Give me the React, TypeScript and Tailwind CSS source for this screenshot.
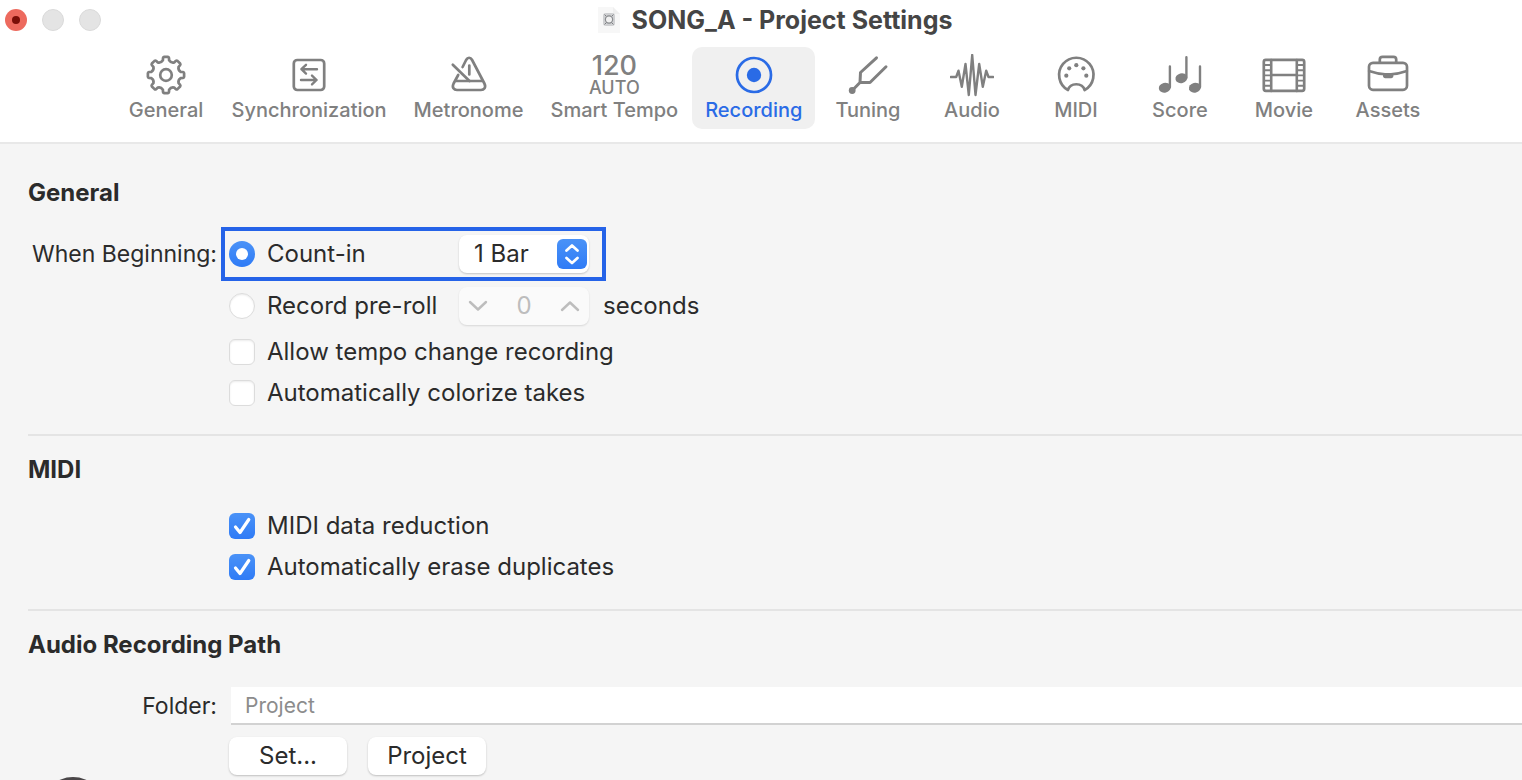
import type { ReactNode } from 'react';

interface Tab {
  label: string;
  icon: ReactNode;
}

function Icon({ children }: { children: ReactNode }) {
  return (
    <svg
      viewBox="0 0 44 44"
      className="h-11 w-11"
      fill="none"
      stroke="currentColor"
      strokeWidth="2.7"
      strokeLinecap="round"
      strokeLinejoin="round"
      aria-hidden="true"
    >
      {children}
    </svg>
  );
}

// Eight rounded teeth around the centre of the gear
function gearPath(cx: number, cy: number) {
  const at = (r: number, deg: number) => {
    const a = ((deg - 90) * Math.PI) / 180;
    return `${(cx + r * Math.cos(a)).toFixed(2)} ${(cy + r * Math.sin(a)).toFixed(2)}`;
  };
  let d = '';
  for (let i = 0; i < 8; i++) {
    const c = i * 45;
    d += `${i === 0 ? 'M' : 'L'}${at(15, c - 12)} L${at(17.3, c - 10)} Q${at(18.2, c - 9)} ${at(18.2, c - 6)} `;
    d += `L${at(18.2, c + 6)} Q${at(18.2, c + 9)} ${at(17.3, c + 10)} L${at(15, c + 12)} Q${at(12.8, c + 22.5)} ${at(15, c + 33)} `;
  }
  return d + 'Z';
}

const tabs: Tab[] = [
  {
    label: 'General',
    icon: (
      <Icon>
        <path d={gearPath(22, 21)} />
        <circle cx="22" cy="21" r="5.8" />
      </Icon>
    ),
  },
  {
    label: 'Synchronization',
    icon: (
      <Icon>
        <rect x="6.8" y="6" width="30.4" height="30" rx="3.5" />
        <path d="M30 15.2H14.5M19 10.8l-4.6 4.4 4.6 4.4M14 26h15.5M25 21.6l4.6 4.4-4.6 4.4" strokeWidth="2.4" />
      </Icon>
    ),
  },
  {
    label: 'Metronome',
    icon: (
      <Icon>
        <path d="M15.6 13l3.5-7c1.6-3 4.4-3 6 0l12.3 23.5c2 4-.4 6.5-3.4 6.5H10c-3 0-5.4-2.500-3.4-6.500l4.600-8.500M9 27h26.500" strokeWidth="2.7" />
        <path d="M5.8 10.8L22.5 27M22.3 11.5v9" strokeWidth="2.7" />
      </Icon>
    ),
  },
  {
    label: 'Smart Tempo',
    icon: (
      <span className="flex h-11 flex-col items-center font-medium">
        <span className="text-[27px] leading-6">120</span>
        <span className="text-lg leading-5">AUTO</span>
      </span>
    ),
  },
  {
    label: 'Recording',
    icon: (
      <Icon>
        <circle cx="22" cy="21" r="17" />
        <circle cx="22" cy="21" r="7.2" fill="currentColor" stroke="none" />
      </Icon>
    ),
  },
  {
    label: 'Tuning',
    icon: (
      <Icon>
        <circle cx="6.2" cy="36.5" r="3.4" fill="currentColor" stroke="none" />
        <path d="M6.2 36.5L14 28.5M30.5 3.8L14.5 18.5 14 28.5h10L40 12.8" strokeWidth="3" />
      </Icon>
    ),
  },
  {
    label: 'Audio',
    icon: (
      <Icon>
        <path d="M.8 23h5.4l2.3-6.3 3.3 16 3.7-22.7 3.3 31 3.4-40 3.3 40 3.7-31 3.6 22.7 3.4-16 2.3 6.3h4.7" strokeWidth="2.4" />
      </Icon>
    ),
  },
  {
    label: 'MIDI',
    icon: (
      <Icon>
        <path d="M14 36A17.200 17.200 0 1 1 30.6 36C28.5 28.3 16.1 28.3 14 36z" />
        <g fill="currentColor" stroke="none">
          <circle cx="12.3" cy="21.7" r="2.1" />
          <circle cx="15.2" cy="14.3" r="2.1" />
          <circle cx="22.3" cy="11.2" r="2.1" />
          <circle cx="29.4" cy="14.3" r="2.1" />
          <circle cx="32.3" cy="21.7" r="2.1" />
        </g>
      </Icon>
    ),
  },
  {
    label: 'Score',
    icon: (
      <Icon>
        <g fill="currentColor" stroke="none">
          <ellipse cx="6.8" cy="33.7" rx="6" ry="4.9" transform="rotate(-14 6.8 33.7)" />
          <ellipse cx="23.4" cy="24.2" rx="6" ry="4.9" transform="rotate(-14 23.4 24.2)" />
          <ellipse cx="36.9" cy="33.7" rx="6" ry="4.9" transform="rotate(-14 36.9 33.7)" />
        </g>
        <path d="M11.9 33V12.5M28.4 23.5V3.2M42 33V12.5" strokeWidth="2.4" />
      </Icon>
    ),
  },
  {
    label: 'Movie',
    icon: (
      <Icon>
        <rect x="1.8" y="5.8" width="40.4" height="31" rx="2" />
        <path d="M9.2 6v31M34.8 6v31M9.2 21h25.6" strokeWidth="2.6" />
        <path d="M2 11h7M2 16.2h7M2 21.4h7M2 26.6h7M2 31.8h7M35 11h7M35 16.2h7M35 21.4h7M35 26.6h7M35 31.8h7" strokeWidth="1.9" />
      </Icon>
    ),
  },
  {
    label: 'Assets',
    icon: (
      <Icon>
        <rect x="3" y="8.8" width="38" height="27" rx="4" />
        <path d="M13.8 8.5V5.6c0-1.8 1-2.8 2.8-2.8h10.8c1.8 0 2.8 1 2.8 2.8v2.9" />
        <path d="M3 17c6 2 10 3 16 3.3h6c6-.3 10-1.3 16-3.3" strokeWidth="2.4" />
        <path d="M17 20.2h10.4v1.8c0 1.4-1 2.2-2.2 2.2h-6c-1.2 0-2.2-.8-2.2-2.2z" fill="currentColor" stroke="none" />
      </Icon>
    ),
  },
];

function Choice({ type, id, name, label, checked = false }: {
  type: 'radio' | 'checkbox';
  id: string;
  name?: string;
  label: string;
  checked?: boolean;
}) {
  return (
    <div className="flex h-7 items-center gap-3">
      <span className="grid h-[26px] w-[26px] shrink-0">
        <input
          id={id}
          type={type}
          name={name}
          defaultChecked={checked}
          className={`peer col-start-1 row-start-1 h-[26px] w-[26px] appearance-none border border-[#dcdcdc] bg-white shadow-[inset_0_1px_2px_rgba(0,0,0,0.08)] checked:border-0 checked:bg-linear-to-b checked:from-[#4a92f7] checked:to-[#2f7bf6] checked:shadow-none ${
            type === 'radio' ? 'rounded-full' : 'rounded-md'
          }`}
        />
        {type === 'radio' ? (
          <span className="pointer-events-none z-10 col-start-1 row-start-1 hidden h-3 w-3 place-self-center rounded-full bg-white peer-checked:block" />
        ) : (
          <svg
            viewBox="0 0 26 26"
            className="pointer-events-none z-10 col-start-1 row-start-1 hidden h-[26px] w-[26px] peer-checked:block"
            fill="none"
            stroke="white"
            strokeWidth="3.2"
            strokeLinecap="round"
            strokeLinejoin="round"
            aria-hidden="true"
          >
            <path d="M6.5 14l4.5 5.500L19.800 6.500" />
          </svg>
        )}
      </span>
      <label htmlFor={id}>{label}</label>
    </div>
  );
}

function Chevron({ up = false }: { up?: boolean }) {
  return (
    <svg viewBox="0 0 20 12" className="h-3 w-5" fill="none" stroke="currentColor" strokeWidth="2.4" strokeLinecap="round" strokeLinejoin="round" aria-hidden="true">
      <path d={up ? 'M2 10l8-7.500 8 7.500' : 'M2 2l8 7.500L18 2'} />
    </svg>
  );
}

export default function App() {
  return (
    <div className="h-screen overflow-hidden bg-[#f5f5f5] font-['Inter',sans-serif] text-2xl leading-7 text-[#2b2b2b]">
      {/* Title bar and toolbar */}
      <header className="border-b-2 border-[#e8e8e8] bg-white pb-[13px]">
        <div className="grid h-10 grid-cols-[120px_1fr_92px] items-center">
          <div className="flex gap-[15px] pl-[5px]">
            <button type="button" aria-label="Close" className="grid h-[22px] w-[22px] place-items-center rounded-full bg-[#ed6a5e]">
              <span className="h-2 w-2 rounded-full bg-[#7a0f08]" />
            </button>
            <button type="button" aria-label="Minimize" className="h-[22px] w-[22px] rounded-full border border-[#dadada] bg-[#e4e4e4]" />
            <button type="button" aria-label="Zoom" className="h-[22px] w-[22px] rounded-full border border-[#dadada] bg-[#e4e4e4]" />
          </div>
          <div className="flex items-center justify-center gap-3">
            <svg viewBox="0 0 22 26" className="h-[26px] w-[22px]" aria-hidden="true">
              <path d="M0 0h15l7 7v19H0z" fill="#f7f7f7" />
              <path d="M15 0l7 7h-7z" fill="#efefef" />
              <rect x="5" y="6" width="12" height="13" rx="3" fill="#cfd0d2" />
              <circle cx="11" cy="12.500" r="3.600" fill="#f1f1f1" stroke="#8b8d90" strokeWidth="1.200" />
              <path d="M6.500 17.500l2-2M15.500 17.500l-2-2M6.500 7.500l1.500 1.500M15.500 7.500l-1.500 1.500" stroke="#7d7f82" />
            </svg>
            <h1 className="text-[25px] font-bold text-[#454545]">SONG_A - Project Settings</h1>
          </div>
        </div>
        <nav className="flex justify-center gap-px pt-[7px] pl-8">
          {tabs.map((tab) => (
            <button
              key={tab.label}
              type="button"
              aria-current={tab.label === 'Recording' ? 'page' : undefined}
              className={`flex h-[82px] min-w-[103px] flex-col items-center rounded-[10px] px-[13px] pt-[7px] text-xl leading-6 font-medium ${
                tab.label === 'Recording' ? 'bg-[#f0f0f0] text-[#2a6be6]' : 'text-[#808080]'
              }`}
            >
              {tab.icon}
              <span>{tab.label}</span>
            </button>
          ))}
        </nav>
      </header>

      <main className="pl-7">
        {/* General */}
        <section className="border-b-2 border-[#e4e4e4] pt-[35px] pb-[27px]">
          <h2 className="font-bold">General</h2>
          <div className="mt-7 grid grid-cols-[189px_1fr] gap-x-3">
            <div className="flex h-[38px] items-center justify-end text-[23px] whitespace-nowrap">When Beginning:</div>
            <div className="flex flex-col">
              <div className="relative flex h-[38px] w-fit items-center">
                <div className="w-[230px]">
                  <Choice type="radio" id="count-in" name="beginning" label="Count-in" checked />
                </div>
                <div className="grid w-[130px]">
                  <select
                    aria-label="Count-in length"
                    defaultValue="1"
                    className="col-start-1 row-start-1 h-[38px] appearance-none rounded-lg bg-white pl-[15px] shadow-[0_1px_2px_rgba(0,0,0,0.2)]"
                  >
                    <option value="1">1 Bar</option>
                    <option value="2">2 Bars</option>
                    <option value="4">4 Bars</option>
                  </select>
                  <span className="pointer-events-none col-start-1 row-start-1 mr-0.5 grid h-[30px] w-[30px] place-items-center self-center justify-self-end rounded-md bg-linear-to-b from-[#4a92f7] to-[#2f7bf6]">
                    <svg viewBox="0 0 30 30" className="h-[30px] w-[30px]" fill="none" stroke="white" strokeWidth="2.7" strokeLinecap="round" strokeLinejoin="round" aria-hidden="true">
                      <path d="M9.500 11.500L15 6.500l5.500 5M9.500 19l5.500 5 5.500-5" />
                    </svg>
                  </span>
                </div>
                {/* Highlight frame */}
                <span className="pointer-events-none absolute -inset-y-2 -right-[17px] -left-2 border-4 border-[#2563e8]" />
              </div>

              <div className="mt-3.5 flex h-[38px] items-center">
                <div className="w-[230px]">
                  <Choice type="radio" id="pre-roll" name="beginning" label="Record pre-roll" />
                </div>
                <div className="flex h-[38px] w-[130px] items-center justify-between rounded-lg bg-[#fafafa] px-[9px] text-[#bdbdbd] shadow-[0_1px_2px_rgba(0,0,0,0.12)]">
                  <button type="button" aria-label="Decrease" disabled><Chevron /></button>
                  <input id="seconds" type="text" defaultValue="0" disabled className="w-10 bg-transparent text-center" />
                  <button type="button" aria-label="Increase" disabled><Chevron up /></button>
                </div>
                <label htmlFor="seconds" className="ml-3.5">seconds</label>
              </div>

              <div className="mt-[13px] flex flex-col gap-[13px]">
                <Choice type="checkbox" id="tempo-change" label="Allow tempo change recording" />
                <Choice type="checkbox" id="colorize" label="Automatically colorize takes" />
              </div>
            </div>
          </div>
        </section>

        {/* MIDI */}
        <section className="border-b-2 border-[#e4e4e4] pt-5 pb-7">
          <h2 className="font-bold">MIDI</h2>
          <div className="mt-7 flex flex-col gap-[13px] pl-[201px]">
            <Choice type="checkbox" id="reduction" label="MIDI data reduction" checked />
            <Choice type="checkbox" id="duplicates" label="Automatically erase duplicates" checked />
          </div>
        </section>

        {/* Audio recording path */}
        <section className="pt-5">
          <h2 className="font-bold">Audio Recording Path</h2>
          <div className="mt-7 grid grid-cols-[189px_1fr] gap-x-3">
            <label htmlFor="folder" className="flex h-[38px] items-center justify-end text-[23px]">Folder:</label>
            <input
              id="folder"
              type="text"
              placeholder="Project"
              className="ml-0.5 h-[38px] border-b-2 border-[#d2d2d2] bg-white px-3.5 text-[21px] placeholder:text-[#8c8c8c]"
            />
            <div className="col-start-2 mt-3 flex gap-[21px]">
              <button type="button" className="h-[38px] w-[118px] rounded-lg bg-white shadow-[0_1px_2px_rgba(0,0,0,0.22)]">Set...</button>
              <button type="button" className="h-[38px] w-[118px] rounded-lg bg-white shadow-[0_1px_2px_rgba(0,0,0,0.22)]">Project</button>
            </div>
          </div>
          <div className="mt-0.5 ml-[13px] h-16 w-16 rounded-full bg-[#4a4648]" />
        </section>
      </main>
    </div>
  );
}
